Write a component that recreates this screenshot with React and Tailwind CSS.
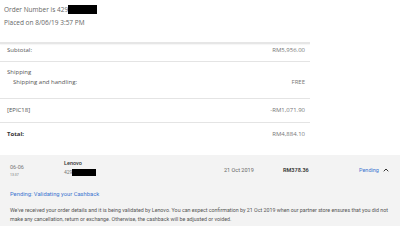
import React from 'react';
import { ChevronUp } from 'lucide-react';

const Row = ({ label, value, className = '' }) => (
  <div className={`flex justify-between pl-[7px] pr-[5px] ${className}`}>
    <span>{label}</span>
    <span className="text-[#777]">{value}</span>
  </div>
);

export default function App() {
  return (
    <div className="w-[400px] h-[240px] bg-white overflow-hidden">
      <div className="w-[310px] font-['Open_Sans',sans-serif] font-normal text-[6px] text-[#555]">
        <div className="pl-[4px] pt-[3px] text-[6.5px] leading-[13px] text-[#666]">
          <div className="flex items-center">
            <span>Order Number is 429</span>
            <span className="inline-block w-[29px] h-[9px] bg-black" />
          </div>
          <div>Placed on 8/06/19 3:57 PM</div>
        </div>
        <div className="mt-[13px] border-t-2 border-[#e6e6e6] shadow-[0_1px_1px_rgba(0,0,0,0.04)]" />
        <div className="leading-[9px] border-b border-[#e4e4e4] h-[18px] pt-[2px]">
          <Row label="Subtotal:" value="RM5,956.00" />
        </div>
        <div className="leading-[10px] border-b border-[#e4e4e4] pt-[5px] pb-[11px]">
          <div className="pl-[7px]">Shipping</div>
          <Row label="Shipping and handling:" value="FREE" className="pl-[13px]" />
        </div>
        <div className="leading-[10px] border-b border-[#e4e4e4] pt-[6px] pb-[7px]">
          <Row label="[EPIC18]" value="-RM1,071.90" />
        </div>
        <div className="leading-[10px] pt-[6px]">
          <Row label={<span className="font-bold text-[#333]">Total:</span>} value="RM4,884.10" />
        </div>
      </div>

      <div className="mt-[16px] h-[71px] bg-[#f3f3f3] font-['Roboto',sans-serif] pl-[10px] pr-[8px]">
        <div className="flex items-center pt-[4px] h-[22px] box-content">
          <div className="w-[54px] text-[#777]">
            <div className="text-[5.5px] leading-[9px]">06-06</div>
            <div className="text-[3.5px] leading-[6px]">13:37</div>
          </div>
          <div className="w-[160px] self-start">
            <div className="text-[5.5px] leading-[9px] font-medium text-[#333]">Lenovo</div>
            <div className="flex items-center text-[5px] leading-[9px] text-[#777]">
              <span>429</span>
              <span className="inline-block w-[24px] h-[7px] bg-black" />
            </div>
          </div>
          <div className="w-[59px] text-[5.5px] text-[#666]">21 Oct 2019</div>
          <div className="w-[76px] text-[5.5px] font-bold text-[#444]">RM378.36</div>
          <div className="flex items-center text-[5.5px] text-[#3b73d0]">
            <span>Pending</span>
            <ChevronUp size={8} strokeWidth={3} className="ml-[3px] text-[#333]" />
          </div>
        </div>
        <div className="mt-[8px] text-[5.8px] leading-[10px] text-[#3b73d0]">
          Pending: Validating your Cashback
        </div>
        <p className="mt-[7px] text-[5.3px] leading-[9px] text-[#555]">
          We've received your order details and it is being validated by Lenovo. You can expect confirmation by 21 Oct 2019 when our partner store ensures that you did not make any cancellation, return or exchange. Otherwise, the cashback will be adjusted or voided.
        </p>
      </div>
    </div>
  );
}
